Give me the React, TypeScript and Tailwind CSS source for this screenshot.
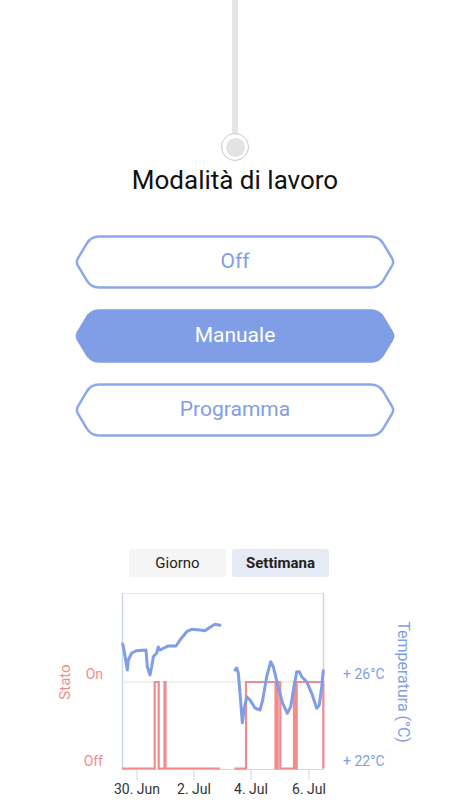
import React, { useState } from 'react'

const BLUE = '#7f9ee6'
const RED = '#f28c8c'

const modes = ['Off', 'Manuale', 'Programma']

// hexagon-ish outline with rounded corners, 320x54
const HEX_PATH =
  'M 24 1.5 H 296 Q 304 1.5 308.3 8.6 L 317.2 23.6 Q 319 27 317.2 30.4 L 308.3 45.4 Q 304 52.5 296 52.5 H 24 Q 16 52.5 11.7 45.4 L 2.8 30.4 Q 1 27 2.8 23.6 L 11.7 8.6 Q 16 1.5 24 1.5 Z'

const temp1 = [
  [122.7, 644], [124, 650], [127.3, 670], [128.3, 660], [131.7, 653], [136.7, 650.7], [146, 650],
  [147.3, 666.7], [150, 675], [151.7, 666.7], [153.3, 656.7], [156.7, 653], [158.3, 647], [160, 650],
  [166, 647], [168.3, 646], [176, 646], [180, 640], [186.7, 631.7], [191.7, 629.3], [200, 630],
  [205, 630.7], [210, 627.3], [215, 624.3], [220, 625.3],
]

const temp2 = [
  [235, 670], [236.7, 668], [238.3, 673], [240, 693], [242.3, 722.7], [244, 710], [246.7, 696.7],
  [250, 700], [255, 708], [260, 710], [262.7, 700], [266.7, 676.7], [270.7, 661.7], [273.3, 666.7],
  [277.3, 683.3], [282.7, 703.3], [287.3, 713.3], [290.7, 706.7], [294, 686.7], [296.7, 671.7],
  [299.3, 671.7], [301.7, 676.7], [306.7, 681.7], [311.7, 693.3], [316.7, 708.3], [319.3, 705],
  [321.7, 686.7], [323.3, 670.7],
]

const ON = 682
const OFF = 768.5

const state1 = [
  [122, OFF], [154.7, OFF], [154.7, ON], [158.7, ON], [158.7, OFF], [164.5, OFF], [164.5, ON],
  [165.5, ON], [165.5, OFF], [220, OFF],
]

const state2 = [
  [234.3, OFF], [246, OFF], [246, ON], [275.5, ON], [275.5, OFF], [277.7, OFF], [277.7, ON],
  [280.3, ON], [280.3, OFF], [294, OFF], [294, ON], [295.3, ON], [295.3, OFF], [296.7, OFF],
  [296.7, ON], [323.3, ON], [323.3, OFF],
]

const pts = (p: number[][]) => p.map(([x, y]) => `${x},${y}`).join(' ')

function ModeButton({ label, active, onClick }: { label: string; active: boolean; onClick: () => void }) {
  return (
    <button onClick={onClick} className="relative w-[320px] h-[54px] flex items-center justify-center">
      <svg className="absolute inset-0" width="320" height="54" viewBox="0 0 320 54">
        <path
          d={HEX_PATH}
          fill={active ? BLUE : 'white'}
          stroke={active ? BLUE : '#8ca8ea'}
          strokeWidth="2.5"
        />
      </svg>
      <span
        className={`relative text-[21px] font-['Roboto',sans-serif] ${active ? 'text-white' : 'text-[#7f9ee6]'}`}
      >
        {label}
      </span>
    </button>
  )
}

function Chart() {
  return (
    <svg width="470" height="215" viewBox="0 585 470 215" className="block font-['Roboto',sans-serif]">
      {/* plot frame */}
      <line x1="122" y1="593.5" x2="324" y2="593.5" stroke="#e6e6e6" strokeWidth="1" />
      <line x1="122.5" y1="593" x2="122.5" y2="769" stroke="#ccd6eb" strokeWidth="1.5" />
      <line x1="323.5" y1="593" x2="323.5" y2="769" stroke="#ccd6eb" strokeWidth="1.5" />
      <line x1="122" y1="682" x2="324" y2="682" stroke="#e2e2e2" strokeWidth="1" />
      <line x1="122" y1="769.5" x2="324" y2="769.5" stroke="#ccd6eb" strokeWidth="1" />
      {[137, 194, 251, 309].map((x) => (
        <line key={x} x1={x} y1="770" x2={x} y2="780" stroke="#ccd6eb" strokeWidth="1" />
      ))}

      {/* state */}
      <polyline points={pts(state1)} fill="none" stroke={RED} strokeWidth="2.2" />
      <polyline points={pts(state2)} fill="none" stroke={RED} strokeWidth="2.2" />

      {/* temperature */}
      <polyline points={pts(temp1)} fill="none" stroke={BLUE} strokeWidth="3" strokeLinejoin="round" strokeLinecap="round" />
      <polyline points={pts(temp2)} fill="none" stroke={BLUE} strokeWidth="3" strokeLinejoin="round" strokeLinecap="round" />

      {/* left axis */}
      <text x="103" y="679" textAnchor="end" fontSize="14" fill={RED}>On</text>
      <text x="103" y="766" textAnchor="end" fontSize="14" fill={RED}>Off</text>
      <text x="0" y="0" transform="translate(70 682) rotate(-90)" textAnchor="middle" fontSize="15" fill={RED}>Stato</text>

      {/* right axis */}
      <text x="343" y="679" fontSize="14" fill={BLUE}>+ 26°C</text>
      <text x="343" y="766" fontSize="14" fill={BLUE}>+ 22°C</text>
      <text x="0" y="0" transform="translate(398 682) rotate(90)" textAnchor="middle" fontSize="16" fill={BLUE}>Temperatura (°C)</text>

      {/* x axis */}
      {[
        [137, '30. Jun'],
        [194, '2. Jul'],
        [251, '4. Jul'],
        [309, '6. Jul'],
      ].map(([x, l]) => (
        <text key={l} x={x} y="794" textAnchor="middle" fontSize="14" fill="#333">{l}</text>
      ))}
    </svg>
  )
}

export default function App() {
  const [mode, setMode] = useState('Manuale')
  const [range, setRange] = useState('Settimana')

  return (
    <div className="w-[470px] h-[800px] bg-white overflow-hidden flex flex-col items-center font-['Roboto',sans-serif]">
      {/* slider */}
      <div className="w-[6px] h-[133px] bg-[#e5e5e8]" />
      <div className="w-[28px] h-[28px] rounded-full bg-white border-[1.5px] border-[#c9c9cc] flex items-center justify-center">
        <div className="w-[19px] h-[19px] rounded-full bg-[#e3e3e6]" />
      </div>

      <h1 className="mt-[4px] text-[26px] leading-[30px] text-[#111]">Modalità di lavoro</h1>

      <div className="mt-[40px] flex flex-col gap-[20px]">
        {modes.map((m) => (
          <ModeButton key={m} label={m} active={mode === m} onClick={() => setMode(m)} />
        ))}
      </div>

      <div className="mt-[112px] w-full flex flex-col">
        <div className="ml-[129px] flex gap-[6px]">
          {['Giorno', 'Settimana'].map((r) => (
            <button
              key={r}
              onClick={() => setRange(r)}
              className={`w-[97px] h-[28px] rounded-[3px] text-[15px] text-[#222] ${
                range === r ? 'bg-[#e6eaf5] font-bold' : 'bg-[#f5f5f6]'
              }`}
            >
              {r}
            </button>
          ))}
        </div>
        <div className="mt-[8px]">
          <Chart />
        </div>
      </div>
    </div>
  )
}
